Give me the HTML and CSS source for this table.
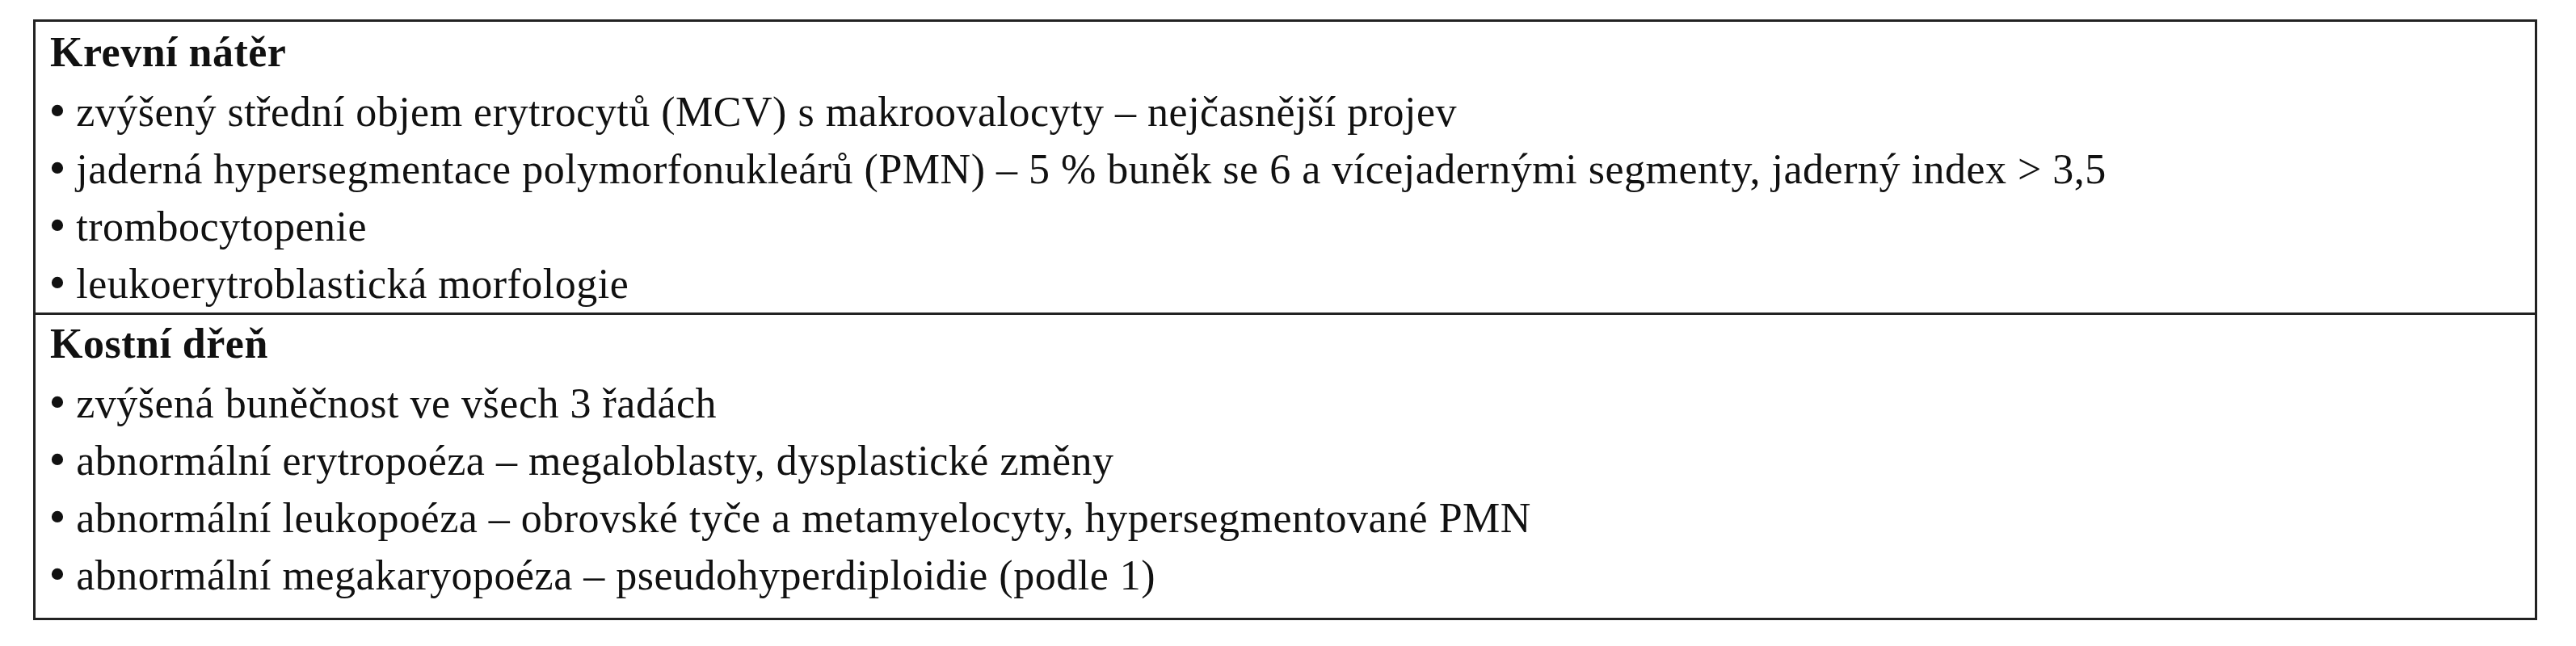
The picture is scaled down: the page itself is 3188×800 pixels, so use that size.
FILE: index.html
```html
<!DOCTYPE html>
<html lang="cs">
<head>
<meta charset="utf-8">
<title>Krevní nátěr a kostní dřeň</title>
<link rel="stylesheet" href="styles.css">
</head>
<body>
<div class="table">
  <section class="sec">
    <div class="head">Krevní nátěr</div>
    <div class="item"><span class="bul">•</span> zvýšený střední objem erytrocytů (MCV) s makroovalocyty – nejčasnější projev</div>
    <div class="item"><span class="bul">•</span> jaderná hypersegmentace polymorfonukleárů (PMN) – 5 % buněk se 6 a vícejadernými segmenty, jaderný index &gt; 3,5</div>
    <div class="item"><span class="bul">•</span> trombocytopenie</div>
    <div class="item"><span class="bul">•</span> leukoerytroblastická morfologie</div>
  </section>
  <section class="sec sec-last">
    <div class="head">Kostní dřeň</div>
    <div class="item"><span class="bul">•</span> zvýšená buněčnost ve všech 3 řadách</div>
    <div class="item"><span class="bul">•</span> abnormální erytropoéza – megaloblasty, dysplastické změny</div>
    <div class="item"><span class="bul">•</span> abnormální leukopoéza – obrovské tyče a metamyelocyty, hypersegmentované PMN</div>
    <div class="item"><span class="bul">•</span> abnormální megakaryopoéza – pseudohyperdiploidie (podle 1)</div>
  </section>
</div>
</body>
</html>
```

FILE: styles.css
```css
html, body {
  margin: 0;
  padding: 0;
  background: #ffffff;
}

body {
  padding: 24px 0 0 41px;
  font-family: "Liberation Serif", "Times New Roman", serif;
  font-size: 52px;
  letter-spacing: 0.5px;
  color: #111111;
}

.table {
  width: 3099px;
  box-sizing: border-box;
  border: 3px solid #222222;
}

.sec {
  padding: 2px 18px 0 18px;
  border-bottom: 3px solid #222222;
}

.sec-last {
  border-bottom: none;
  padding-top: 0;
  padding-bottom: 17px;
}

.head {
  font-weight: bold;
  line-height: 72px;
  height: 72px;
}

.sec .item:nth-child(2) {
  margin-top: 2px;
}

.item {
  line-height: 71px;
  height: 71px;
  white-space: nowrap;
}

.bul {
  display: inline-block;
  transform: scale(1.15);
  transform-origin: 50% 62%;
}
```
